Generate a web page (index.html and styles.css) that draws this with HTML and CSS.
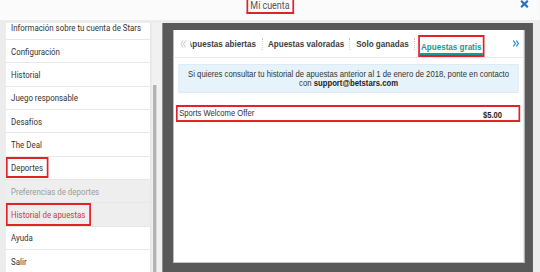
FILE: index.html
```html
<!DOCTYPE html>
<html lang="es">
<head>
    <meta charset="UTF-8">
    <meta name="viewport" content="width=device-width, initial-scale=1.0">
    <title>Mi cuenta</title>
    <link rel="stylesheet" href="styles.css">
</head>
<body>
<div class="page">
    <header class="topbar">
        <span></span>
        <h1 class="title"><span class="mark">Mi cuenta</span></h1>
        <button class="close" aria-label="Cerrar">
            <svg width="10" height="8" viewBox="0 0 10 10" preserveAspectRatio="none">
                <path d="M1 1 L9 9 M9 1 L1 9" stroke="#2271c4" stroke-width="2.6" fill="none"/>
            </svg>
        </button>
    </header>

    <div class="main">
        <!-- Menu -->
        <nav class="side">
            <div class="menu">
                <ul class="menu-list">
                    <li>Información sobre tu cuenta de Stars</li>
                    <li>Configuración</li>
                    <li>Historial</li>
                    <li>Juego responsable</li>
                    <li>Desafíos</li>
                    <li>The Deal</li>
                    <li><span class="mark mark-item">Deportes</span></li>
                    <li class="sub">Preferencias de deportes</li>
                    <li class="sub current"><span class="mark mark-item full">Historial de apuestas</span></li>
                    <li>Ayuda</li>
                    <li>Salir</li>
                </ul>
            </div>
            <div class="scroll"><div class="thumb"></div></div>
        </nav>

        <!-- Historial -->
        <section class="panel">
            <div class="card">
                <div class="tabs">
                    <span class="arrow prev">
                        <svg width="7" height="8" viewBox="0 0 7 8"><path d="M3.5 0.5 L0.8 4 L3.5 7.5 M6.5 0.5 L3.8 4 L6.5 7.5" stroke="#c9c9c9" stroke-width="1.1" fill="none"/></svg>
                    </span>
                    <div class="tab-view">
                        <div class="tab-track">
                            <a href="#" class="tab">Apuestas abiertas</a>
                            <span class="sep"></span>
                            <a href="#" class="tab">Apuestas valoradas</a>
                            <span class="sep"></span>
                            <a href="#" class="tab">Solo ganadas</a>
                            <span class="sep"></span>
                            <a href="#" class="tab active"><span class="mark tab-label">Apuestas gratis</span></a>
                        </div>
                    </div>
                    <span class="arrow next">
                        <svg width="8" height="7" viewBox="0 0 8 7"><path d="M0.8 0.5 L3.4 3.5 L0.8 6.5 M4.4 0.5 L7 3.5 L4.4 6.5" stroke="#2e8fd8" stroke-width="1.3" fill="none"/></svg>
                    </span>
                </div>

                <p class="notice">
                    Si quieres consultar tu historial de apuestas anterior al 1 de enero de 2018, ponte en contacto<br>
                    con <b>support@betstars.com</b>
                </p>

                <div class="mark bet-row">
                    <span class="bet-name">Sports Welcome Offer</span>
                    <span class="bet-amount">$5.00</span>
                </div>
            </div>
        </section>
    </div>
</div>
</body>
</html>
```

FILE: styles.css
```css
html, body {
    margin: 0;
    height: 100%;
    overflow: hidden;
}
body {
    background: #ececec;
    font-family: Roboto, "Liberation Sans", sans-serif;
    color: #333;
}
/* the shot is narrower than it is tall, so the whole page is squeezed sideways */
.page {
    width: 635.2px;
    height: 272px;
    display: flex;
    flex-direction: column;
    transform: scaleX(0.85);
    transform-origin: 0 0;
}
.mark {
    border: 2px solid #e3212b;
    box-sizing: border-box;
}

.topbar {
    height: 20px;
    flex: none;
    background: #fbfbfb;
    display: grid;
    grid-template-columns: 1fr auto 1fr;
    align-items: start;
    margin-bottom: 3px;
}
.title {
    margin: 0;
    font-size: 10.5px;
    font-weight: normal;
    color: #555;
}
.title .mark {
    display: block;
    height: 14px;
    border-top: none;
    padding: 1px 3px 0;
    line-height: 10px;
}
.close {
    justify-self: end;
    margin: 0 13px 0 0;
    padding: 0;
    border: none;
    background: none;
    line-height: 0;
}

.main {
    flex: 1;
    display: flex;
    min-height: 0;
}

.side {
    width: 191px;
    flex: none;
    display: flex;
    padding-left: 7px;
    box-sizing: border-box;
}
.menu {
    width: 169.5px;
    background: #fff;
    overflow: hidden;
}
.menu-list {
    list-style: none;
    margin: -6.33px 0 0;
    padding: 0;
}
.menu-list li {
    height: 23.33px;
    box-sizing: border-box;
    border-bottom: 1px solid #e7e7e7;
    padding-left: 6px;
    display: flex;
    align-items: center;
    font-size: 9.3px;
    color: #333;
}
.menu-list li.sub {
    background: #eeeeee;
    color: #9b9b9b;
}
.menu-list li.current {
    color: #d8343f;
}
.mark-item {
    display: flex;
    align-items: center;
    height: 21px;
    margin-left: -6px;
    padding: 0 4px;
}
.mark-item.full {
    height: 23.33px;
}
.scroll {
    flex: 1;
    background: #f1f1f1;
    border-left: 1px solid #dcdcdc;
    padding: 62px 0 0 2px;
}
.thumb {
    width: 4.2px;
    height: 100%;
    background: #b3b3b3;
}

.panel {
    flex: 1;
    background: #595959;
    padding: 7px 9.4px 9px 12.9px;
    margin-right: 8.5px;
    display: flex;
}
.card {
    flex: 1;
    background: #fff;
    border-right: 1px solid #c4c4c4;
    border-bottom: 1px solid #c4c4c4;
    font-family: "Liberation Sans", Arial, sans-serif;
}

.tabs {
    height: 28px;
    box-sizing: border-box;
    border-bottom: 1px solid #e6e6e6;
    display: flex;
    align-items: center;
    padding: 0 5px 0 8.3px;
}
.arrow {
    flex: none;
    line-height: 0;
}
.arrow.prev {
    margin-right: 4.7px;
}
.tab-view {
    flex: 1;
    overflow: hidden;
    height: 100%;
}
.tab-track {
    display: flex;
    align-items: center;
    height: 100%;
    margin-left: -11px;
    white-space: nowrap;
}
.tab {
    padding: 0 6.5px;
    font-size: 9.5px;
    font-weight: bold;
    color: #3c3c3c;
    text-decoration: none;
}
.sep {
    height: 12px;
    border-left: 1px dotted #c2c2c2;
}
.tab.active {
    align-self: flex-end;
    padding: 0 4px;
    color: #17998b;
}
.tab-label {
    display: block;
    height: 22px;
    padding: 4px 1px 0;
    box-shadow: inset 0 -2px 0 #17998b;
}
.arrow.next {
    margin-left: 6px;
}

.notice {
    margin: 6px 6px 0;
    padding: 5px 0 4px;
    background: #e7f3fa;
    border: 1px solid #dcebf4;
    text-align: center;
    font-size: 9.1px;
    line-height: 9px;
    color: #333;
}
.notice b {
    color: #222;
}

.bet-row {
    margin: 12px 4.6px 0 3.5px;
    height: 17px;
    display: flex;
    justify-content: space-between;
    padding: 0 19px 0 1.5px;
    font-size: 9px;
    color: #333;
}
.bet-name {
    padding-top: 0.5px;
}
.bet-amount {
    align-self: flex-end;
    padding-bottom: 0.5px;
    font-weight: bold;
    color: #222;
}
```
